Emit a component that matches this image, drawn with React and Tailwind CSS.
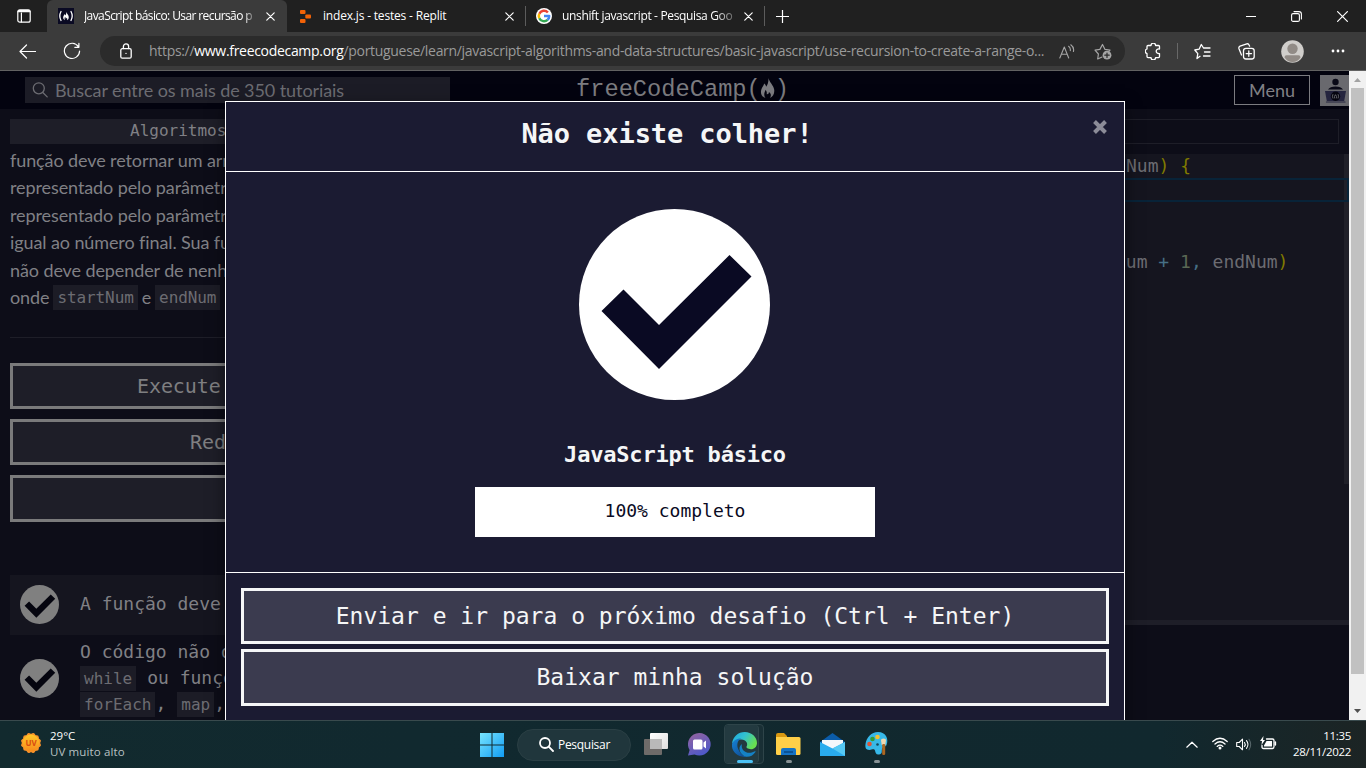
import React from "react";

const ui = "font-['Open_Sans','Noto_Sans',sans-serif]";
const mono = "font-['DejaVu_Sans_Mono','Liberation_Mono',monospace]";

function Svg({ w = 20, h = w, vb, className = "", children, ...rest }) {
  return (
    <svg width={w} height={h} viewBox={vb || `0 0 ${w} ${h}`} fill="none" stroke="currentColor" strokeWidth="1.2" strokeLinecap="round" strokeLinejoin="round" className={`shrink-0 ${className}`} {...rest}>
      {children}
    </svg>
  );
}

function Close() {
  return (
    <Svg w={9}>
      <path d="M.8.8 8.2 8.2M8.2.8.8 8.2" />
    </Svg>
  );
}

const flame = "M5.6 0C6.4 3 9.2 5 9.7 8.2C10 11 8.9 13 6.8 14C7.7 12.2 7.5 10.8 6 9.8C6 11 5.3 11.5 4.4 11.3C4.8 10 4.2 9 3.7 8.2C3 10 2 11.6 3.6 14C1 13.2 -.2 10.6.7 8C1.3 6.4 2.4 5.3 2.6 3.8C3.6 4.4 4 5.3 4 6.2C5.3 4.6 5.9 2.2 5.6 0Z";

function TabBar() {
  return (
    <div className="flex h-8 shrink-0 bg-[#202020]">
      <div className="flex w-[47px] items-center pl-[17px]">
        <Svg w={14}>
          <rect x=".8" y=".8" width="12.4" height="12.4" rx="2" />
          <path d="M1 2.7h12M4.4 4v9" />
          <path d="M2 2h10" strokeWidth="2" />
        </Svg>
      </div>
      <div className="flex w-[240px] items-center rounded-t-[6px] bg-[#3b3b3b] pl-[11px]">
        <Svg w={16} strokeWidth="1.3">
          <rect width="16" height="16" fill="#0a0a23" stroke="none" />
          <path d="M3 3.5Q.6 8 3 12.5M13 3.5q2.4 4.500 0 9" />
          <path d={flame} transform="translate(4.900 3.800) scale(.6)" fill="#fff" stroke="none" />
        </Svg>
        <div className={`${ui} ml-[10px] w-[174px] whitespace-nowrap text-[12px] leading-5 tracking-[-0.6px] [mask-image:linear-gradient(90deg,#000_92%,#0003_98%)]`}>
          JavaScript básico: Usar recursão p
        </div>
        <div className="ml-[8px]"><Close /></div>
      </div>
      <div className="flex w-[238px] items-center pl-[13px]">
        <Svg w={11} h={13} stroke="none" fill="#f26207">
          <rect width="5.500" height="4" rx="1" />
          <rect x="5.300" y="4.500" width="5.700" height="4" rx="1" />
          <rect y="9" width="5.500" height="4" rx="1" />
        </Svg>
        <div className={`${ui} ml-[12px] w-[182px] whitespace-nowrap text-[12px] leading-5 tracking-[-0.18px]`}>index.js - testes - Replit</div>
        <Close />
      </div>
      <div className="my-[6px] w-px bg-[#5c5c5c]" />
      <div className="flex w-[238px] items-center pl-[10px]">
        <Svg w={16} stroke="none">
          <circle cx="8" cy="8" r="8" fill="#fff" />
          <g fill="none" strokeWidth="2.500" strokeLinecap="butt">
            <path d="M11.900 4.500A5.200 5.200 0 0 0 3.300 5.800" stroke="#ea4335" />
            <path d="M3.300 5.700a5.200 5.200 0 0 0 0 4.600" stroke="#fbbc05" />
            <path d="M3.300 10.200a5.200 5.200 0 0 0 8.300 1.600" stroke="#34a853" />
            <path d="M11.500 11.900A5.200 5.200 0 0 0 13.200 8H8" stroke="#4285f4" />
          </g>
        </Svg>
        <div className={`${ui} ml-[10px] w-[174px] whitespace-nowrap text-[12px] leading-5 tracking-[-0.35px] [mask-image:linear-gradient(90deg,#000_88%,#0003_100%)]`}>
          unshift javascript - Pesquisa Goo
        </div>
        <div className="ml-[8px]"><Close /></div>
      </div>
      <div className="my-[6px] w-px bg-[#5c5c5c]" />
      <div className="flex flex-1 items-center pl-[11px]">
        <Svg w={13}><path d="M6.500 0v13M0 6.500h13" /></Svg>
      </div>
      <div className="flex items-center">
        <Svg w={10} className="mr-[35px]"><path d="M0 5.500h10" strokeWidth="1" /></Svg>
        <Svg w={11} className="mr-[35px]" strokeWidth="1.100">
          <rect x=".6" y="2.600" width="7.800" height="7.800" rx="1.500" />
          <path d="M3 .6h5a2.400 2.400 0 0 1 2.400 2.400v5" />
        </Svg>
        <Svg w={11} className="mr-[18px]"><path d="M.6.6l9.800 9.800M10.400.6.6 10.400" /></Svg>
      </div>
    </div>
  );
}

function Toolbar() {
  return (
    <div className="flex h-[39px] shrink-0 items-center border-b border-[#626262] bg-[#3b3b3b]">
      <Svg w={17} h={15} className="ml-[19px]"><path d="M1 7.500h15.500M7.500 1 1 7.500 7.500 14" /></Svg>
      <Svg w={18} className="ml-[27px]"><path d="M15.500 4.900A7.600 7.600 0 1 0 16.600 9M15.900 1.300V5.300H11.800" /></Svg>
      <div className="ml-[19px] flex h-[30px] w-[1025px] items-center rounded-full bg-[#2b2b2b] pl-[20px]">
        <Svg w={12} h={16} strokeWidth="1.300">
          <rect x=".8" y="5.700" width="10.400" height="9.500" rx="1.500" />
          <path d="M3.400 5.500V3.500a2.600 2.600 0 0 1 5.200 0v2" />
          <circle cx="6" cy="10.400" r=".7" fill="#fff" stroke="none" />
        </Svg>
        <div className={`${ui} ml-[17px] w-[897px] whitespace-nowrap text-[14px] leading-5 tracking-[-0.31px] text-[#9a9a9a]`}>
          https://<span className="text-white">www.freecodecamp.org</span>/portuguese/learn/javascript-algorithms-and-data-structures/basic-javascript/use-recursion-to-create-a-range-o...
        </div>
        <Svg w={16} h={15} className="ml-[13px] text-[#a5a5a5]" strokeWidth="1.100">
          <path d="M.8 14 5.300 3l4.400 11M2.400 10.300h5.800M9.600 2.300q2.200 1.700 1.700 4.400M11.800.8q3.700 2.700 2.600 6.700" />
        </Svg>
        <Svg w={18} h={17} className="ml-[19px] text-[#a5a5a5]">
          <path d="M8 14 3.700 16l.7-5L1 7.200l4.900-.8L8.500 1.500 11 6.400l5 .8-1.300 1.500" />
          <circle cx="13" cy="12.200" r="4.400" fill="currentColor" stroke="none" />
          <path d="M10.800 12.200h4.400M13 10v4.400" stroke="#2b2b2b" />
        </Svg>
      </div>
      <Svg w={16} h={17} className="ml-[20px]" strokeWidth="1.300">
        <path d="M2 3.500q0-1 1-1h3a2.300 2.300 0 0 1 4.600 0H13.500q1 0 1 1V6c-2.200-.3-3.300.9-3.300 2.300s1.300 2.500 3.300 2.300v3q0 1-1 1h-2.900a2.300 2.300 0 0 1-4.600 0H3q-1 0-1-1v-3a2.400 2.400 0 0 1 0-4.600Z" />
      </Svg>
      <div className="ml-[16px] h-4 w-px bg-[#686868]" />
      <Svg w={17} h={17} className="ml-[16px]" strokeWidth="1.300">
        <path d="M6 13.300 3 15.600l.8-5L.8 7l4.300-.8L7.300 1.500 9.500 5H16M10.500 9H16M9.500 13H16" />
      </Svg>
      <Svg w={17} h={17} className="ml-[27px]" strokeWidth="1.300">
        <rect x="5.500" y="5.300" width="10.700" height="10.700" rx="2.500" />
        <path d="M3.500 12 1 5.800Q.4 4 2 3.200L8.800.8q1.700-.4 2.300 1.200l.5 1.200M10.800 8v5.300M8.200 10.600h5.300" />
      </Svg>
      <Svg w={23} h={23} className="ml-[26px]" stroke="none">
        <circle cx="11.500" cy="11.500" r="11.300" fill="#d0cecb" />
        <circle cx="11.500" cy="8.700" r="5.200" fill="#918b86" />
        <path d="M3.500 17.500q0-2.200 2-2.200h12q2 0 2 2.200Q16.500 22 11.500 22t-8-4.500Z" fill="#918b86" />
      </Svg>
      <Svg w={14} h={4} className="ml-[27px]" stroke="none" fill="#fff">
        <circle cx="2" cy="2" r="1.400" /><circle cx="7" cy="2" r="1.400" /><circle cx="12" cy="2" r="1.400" />
      </Svg>
    </div>
  );
}

function SiteNav() {
  return (
    <div className="flex h-[38px] shrink-0 bg-[#03030f] font-['Lato',sans-serif]">
      <div className="ml-[25px] mt-[6px] flex h-[26px] w-[425px] items-center bg-[#1c1c26] pl-[7px] text-[#6c6c72]">
        <Svg w={16} strokeWidth="1.300"><circle cx="6.800" cy="6.300" r="5.500" /><path d="m10.800 10.500 4.400 4.400" /></Svg>
        <span className="ml-[7px] whitespace-nowrap text-[18px] leading-6 tracking-[-0.08px]">Buscar entre os mais de 350 tutoriais</span>
      </div>
      <div className="ml-[126px] mt-[5px] flex h-[27px] items-start text-[#7c7c80]">
        <span className="whitespace-nowrap font-['Liberation_Mono',monospace] text-[23.700px] leading-[27px]">freeCodeCamp(</span>
        <Svg w={15} h={20} vb="0 0 10 14" className="-ml-[1px] mt-[2px]"><path d={flame} fill="currentColor" stroke="none" /></Svg>
        <span className="font-['Liberation_Mono',monospace] text-[23.700px] leading-[27px]">)</span>
      </div>
      <div className="flex-1" />
      <div className="mt-[4px] flex h-[30px] w-[76px] items-center justify-center border border-[#7b7b80] pb-px text-[18px] leading-6 text-[#808085]">Menu</div>
      <Svg w={29} h={31} className="ml-[10px] mt-[4px]" stroke="none">
        <rect width="29" height="31" fill="#69696e" />
        <circle cx="15.500" cy="7" r="3.200" fill="#090917" />
        <path d="M8 14.500q2-3 7.500-3t7.500 3Z" fill="#090917" />
        <path d="M5 16h21l-1.800 10H6.800Z" fill="#25253f" />
        <path d="M6.500 27h18.500" stroke="#25253f" strokeWidth="1.200" />
        <circle cx="15.500" cy="21.300" r="4.700" fill="#05050f" />
        <path d="M12.800 19.500q-1 1.800 0 3.600M18.200 19.500q1 1.800 0 3.600M14.500 23q-.7-1.600 1-3.300 1.700 1.700 1 3.300" stroke="#77777c" strokeWidth=".8" />
      </Svg>
    </div>
  );
}

function Check({ size, disc, mark, className = "" }) {
  return (
    <svg width={size} height={size} viewBox="0 0 191 191" className={`shrink-0 ${className}`}>
      <circle cx="95.500" cy="95.500" r="95.500" fill={disc} />
      <path d="M22.500 102 44.500 80.500 80 116 150.500 46 172.500 67.500 80 160Z" fill={mark} />
    </svg>
  );
}

function Code({ children }) {
  return <code className={`${mono} inline-block h-[25px] bg-[#1c1c26] px-1 align-middle text-[16px] leading-[25px] text-[#6c6c72]`}>{children}</code>;
}

function PanelButton({ children, className }) {
  return (
    <div className={`${mono} shrink-0 overflow-hidden whitespace-nowrap border-[3px] border-[#7a7a7b] bg-[#1e1e28] text-[20px] leading-[40px] tracking-[-0.1px] text-[#7f7f81] ${className}`}>{children}</div>
  );
}

function Instructions() {
  return (
    <div className="flex w-[450px] shrink-0 flex-col pl-[10px] pt-[10px] text-[#808085]">
      <div className={`${mono} h-[25px] shrink-0 whitespace-nowrap bg-[#1e1e28] pl-[120px] text-[16px] leading-[23px]`}>Algoritmos</div>
      <div className="mt-[3px] h-[165px] shrink-0 whitespace-nowrap font-['Lato',sans-serif] text-[18px] leading-[27.400px] tracking-[-0.1px]">
        <div>função deve retornar um array</div>
        <div>representado pelo parâmetro</div>
        <div>representado pelo parâmetro</div>
        <div>igual ao número final. Sua função</div>
        <div>não deve depender de nenhum</div>
        <div className="flex items-center gap-[4px]">onde <Code>startNum</Code> e <Code>endNum</Code></div>
      </div>
      <div className="mt-[25px] h-px shrink-0 bg-[#1e1e28]" />
      <PanelButton className="mt-[25px] h-[46px] pl-[124px]">Execute os testes</PanelButton>
      <PanelButton className="mt-[10px] h-[46px] pl-[177px]">Redefinir</PanelButton>
      <PanelButton className="mt-[10px] h-[47px]" />
      <div className={`${mono} mt-[53px] flex h-[60px] shrink-0 items-center bg-[#15151f] pl-[10px] text-[18px]`}>
        <Check size={39} disc="#808080" mark="#05050f" className="-mt-px" />
        <span className="-mt-[4px] ml-[21px] whitespace-nowrap">A função deve</span>
      </div>
      <div className={`${mono} flex h-[86px] shrink-0 items-center pl-[10px] text-[18px] leading-[26px]`}>
        <Check size={39} disc="#808080" mark="#05050f" />
        <div className="ml-[21px] whitespace-nowrap">
          <div>O código não deve</div>
          <div className="flex items-center gap-[11px]"><Code>while</Code><span>ou funções</span></div>
          <div className="flex items-center"><Code>forEach</Code><span className="mr-[11px]">,</span><Code>map</Code><span>,</span></div>
        </div>
      </div>
    </div>
  );
}

function Editor() {
  return (
    <div className={`${mono} flex min-w-0 flex-1 flex-col text-[18px] text-[#6c6c72]`}>
      <div className="ml-[10px] mr-[10px] mt-[10px] h-[25px] shrink-0 border border-[#1e1e28]" />
      <div className="mt-[10px] flex h-[466px] shrink-0 bg-[#15151f]">
        <div className="min-w-0 flex-1 whitespace-pre">
          <div className="h-[24px] pl-[676px] leading-[24px]">Num<span className="text-[#807a00]">) {"{"}</span></div>
          <div className="relative -mr-[5px] h-[24px] border-2 border-[#082338]" />
          <div className="mt-[48px] h-[24px] pl-[665px] leading-[24px]">Num <span className="text-[#466f85]">+</span> <span className="text-[#5a6854]">1</span><span className="text-[#466f85]">,</span> endNum<span className="text-[#807a00]">)</span></div>
        </div>
        <div className="h-[330px] w-[5px] bg-[#202029]" />
      </div>
      <div className="h-[5px] shrink-0 bg-[#1e1e28]" />
    </div>
  );
}

function ModalButton({ children, className }) {
  return (
    <button className={`block w-full border-[3px] border-[#f5f6f7] bg-[#3b3b4f] text-[23px] text-[#f5f6f7] ${className}`}>{children}</button>
  );
}

function Modal() {
  return (
    <div className={`${mono} absolute left-[225px] top-[30px] flex h-[640px] w-[900px] flex-col border border-white bg-[#1b1b32] text-[#f5f6f7] shadow-[0_5px_15px_rgba(0,0,0,0.5)]`}>
      <div className="flex h-[70px] shrink-0 items-start border-b border-white pt-[12px]">
        <h2 className="ml-[15px] flex-1 text-center text-[27px] font-bold leading-[40px] tracking-[-0.08px]">Não existe colher!</h2>
        <Svg w={14} className="mr-[17px] mt-[6px] text-[#8c8c98]" strokeLinecap="butt" strokeWidth="4"><path d="M1.500 1.500l11 11M12.500 1.500l-11 11" /></Svg>
      </div>
      <div className="flex h-[401px] shrink-0 flex-col items-center border-b border-white pt-[37px]">
        <Check size={191} disc="#ffffff" mark="#0a0a23" className="mr-px" />
        <div className="mt-[40px] text-[22px] font-bold leading-[30px] tracking-[-0.2px]">JavaScript básico</div>
        <div className="mt-[17px] h-[50px] w-[400px] bg-white text-center text-[18px] leading-[47px] text-[#0a0a23]">100% completo</div>
      </div>
      <div className="px-[15px] pt-[15px]">
        <ModalButton className="h-[56px]">Enviar e ir para o próximo desafio (Ctrl + Enter)</ModalButton>
        <ModalButton className="mt-[5px] h-[57px]">Baixar minha solução</ModalButton>
      </div>
    </div>
  );
}

function Scrollbar() {
  return (
    <div className="flex w-[17px] shrink-0 flex-col items-center bg-[#f1f1f1]">
      <Svg w={7} h={4} className="mt-[7px]" stroke="none"><path d="M0 4 3.500 0 7 4Z" fill="#a3a3a3" /></Svg>
      <div className="mt-[6px] h-[586px] w-[13px] bg-[#c1c1c1]" />
      <Svg w={7} h={4} className="mt-[35px]" stroke="none"><path d="M0 0h7L3.500 4Z" fill="#505050" /></Svg>
    </div>
  );
}

function Taskbar() {
  return (
    <div className={`${ui} flex h-12 shrink-0 items-center border-t border-[#394a4d] bg-[linear-gradient(90deg,#122a2e,#11292f_30%,#11282e_85%,#1c2424)]`}>
      <Svg w={22} h={22} className="-mt-[3px] ml-[20px]" stroke="none">
        <defs><linearGradient id="sun" x2="0" y2="1"><stop stopColor="#ffc928" /><stop offset="1" stopColor="#f78a1d" /></linearGradient></defs>
        {[0, 30, 60].map((a) => <rect key={a} x="3.200" y="3.200" width="15.600" height="15.600" rx="2" fill="#f8922a" transform={`rotate(${a} 11 11)`} />)}
        <circle cx="11" cy="11" r="8.600" fill="url(#sun)" />
        <text x="11" y="14" textAnchor="middle" fill="#d84b10" fontSize="8" fontWeight="700">UV</text>
      </Svg>
      <div className="-mt-[2px] ml-[8px] w-[430px] text-[11.500px] leading-[16px]">
        <div>29°C</div>
        <div className="tracking-[0.12px] text-[#b9c1c2]">UV muito alto</div>
      </div>
      <Svg w={24} h={24} stroke="none">
        <defs><linearGradient id="win" x2="1" y2="1"><stop stopColor="#78e5ff" /><stop offset="1" stopColor="#119cf3" /></linearGradient></defs>
        <path d="M0 0h11.500v11.500H0ZM12.500 0H24v11.500H12.500ZM0 12.500h11.500V24H0ZM12.500 12.500H24V24H12.500Z" fill="url(#win)" />
      </Svg>
      <div className="ml-[13px] flex h-8 w-[114px] shrink-0 items-center rounded-full border border-[#2a3f44] bg-[#20363c] pl-[21px]">
        <Svg w={15} strokeWidth="1.800"><circle cx="6" cy="6" r="5" /><path d="m9.700 9.700 4.300 4.300" /></Svg>
        <span className="ml-[4px] text-[12px] tracking-[-0.3px]">Pesquisar</span>
      </div>
      <Svg w={24} h={22} className="-mt-[2px] ml-[13px]" stroke="none">
        <defs><linearGradient id="tv" x2="1" y2="1"><stop stopColor="#fff" /><stop offset="1" stopColor="#dedede" /></linearGradient></defs>
        <rect x="6" width="18" height="16" rx="1" fill="url(#tv)" />
        <rect y="6" width="18" height="16" rx="1" fill="#6e6b69" />
        <path d="M6 6h12v10H6Z" fill="#b9b9b9" />
      </Svg>
      <Svg w={23} h={23} className="-mt-px ml-[20px]" stroke="none">
        <defs><linearGradient id="chat" x2=".5" y2="1"><stop stopColor="#97649c" /><stop offset="1" stopColor="#5059c9" /></linearGradient></defs>
        <path d="M11.500 0A11.300 11.300 0 1 1 6.500 21.500L0 22.500 1.600 17A11.300 11.300 0 0 1 11.500 0Z" fill="url(#chat)" />
        <rect x="5" y="6.500" width="9.500" height="10" rx="1.500" fill="#fff" /><path d="M15.500 9.500 18 7.500v8l-2.500-2Z" fill="#fff" />
      </Svg>
      <div className="-mt-px ml-[13px] flex h-[40px] w-[40px] shrink-0 rounded-[4px] border border-[#2e4449] bg-[#192f35]">
        <div className="flex w-[34px] shrink-0 flex-col items-center rounded-[4px] border-r border-[#30464b] bg-[#233a40] pl-[6px] pt-[7px]">
          <Svg w={25} h={25} vb="0 0 24 24" stroke="none">
            <defs>
              <linearGradient id="edgeTop" x2="1" y2=".5"><stop stopColor="#1ba7e2" /><stop offset=".5" stopColor="#33c2cf" /><stop offset="1" stopColor="#68df50" /></linearGradient>
              <linearGradient id="edgeLow" x2=".7" y2="1"><stop stopColor="#1684d8" /><stop offset="1" stopColor="#104f97" /></linearGradient>
            </defs>
            <path d="M0 11.500C.7 4.500 6 0 12.200 0 19 0 24 4.900 24 10.500c0 3.700-2.700 6-5.800 6-3 0-4.900-1.300-4.200-2.500 1.700-2.800-.5-6.800-5-6.800-4.100 0-7.600 2-9 4.300Z" fill="url(#edgeTop)" />
            <path d="M0 11.500C1.500 7.600 5.500 6 9 6.200c-3.700 1.600-4.800 5.700-3.200 9.800 1.300 3.500 4 6.500 7.700 7.800C5.500 24.700-.8 18.800 0 11.500Z" fill="url(#edgeLow)" />
            <path d="M9.700 11.500c-1.500 3.700 1.600 8.500 7 8.500 2 0 3.900-.7 5.300-1.500.5-.2.800.2.500.6C20.300 22.400 17 24.200 13.500 23.800 6.500 21.200 5.500 14 9.700 11.500Z" fill="#1581c4" />
          </Svg>
          <div className="mt-[3px] h-[3px] w-4 shrink-0 rounded-full bg-[#4cc2f5]" />
        </div>
      </div>
      <div className="-mt-[3px] ml-[12px] flex h-[40px] flex-col items-center justify-end">
        <Svg w={25} h={23} stroke="none">
          <path d="M0 2q0-2 2-2h6l3 3v4H0Z" fill="#d99811" /><path d="M0 4h23q1.500 0 1.500 1.500v15Q24.500 22 23 22H1.500Q0 22 0 20.500Z" fill="#ffcf48" />
          <path d="M5 17q0-2 2-2h11q2 0 2 2v5H5Z" fill="#1473c5" /><path d="M8 18h9v2H8Z" fill="#0a5294" />
        </Svg>
        <div className="mt-[4px] h-[3px] w-[6px] rounded-full bg-[#879295]" />
      </div>
      <Svg w={25} h={23} className="-mt-px ml-[19px]" stroke="none">
        <path d="M12.500 0 25 9v14H0V9Z" fill="#0b5ca9" /><path d="M2 7h21v7l-10.500 4L2 14Z" fill="#f4f7fb" />
        <path d="M0 9 12.500 15.500 25 9v14H0Z" fill="#29abed" /><path d="M12.500 15.500 25 23V9Z" fill="#55c9f4" />
      </Svg>
      <div className="-mt-[3px] ml-[20px] flex h-[40px] flex-col items-center justify-end">
        <Svg w={24} h={24} stroke="none">
          <path d="M13 0C21 0 24 7 21.500 13c-1 2.300-4 1.500-4.500 4-.5 3 .5 5-3 5.500-3 .5-3.500-2-4-4-.8-2.500-3-.8-5.500-.6C1 18 0 16 .5 12 1.500 5 6.500 0 13 0Z" fill="#37b8e8" />
          <circle cx="4.500" cy="12" r="2.300" fill="#dc5436" /><circle cx="7.500" cy="7" r="2.300" fill="#359d35" /><circle cx="12.500" cy="5" r="2.300" fill="#f5c12e" /><circle cx="12.500" cy="12.500" r="1.300" fill="#12465d" />
          <path d="M16 8q0-1.500 2.500-1.500T21 8l-.7 5h-3.600Z" fill="#efd7af" /><rect x="17.200" y="12" width="3" height="11" rx="1.300" fill="#ac6722" />
        </Svg>
        <div className="mt-[4px] h-[3px] w-[6px] rounded-full bg-[#879295]" />
      </div>
      <div className="flex-1" />
      <Svg w={12} h={7}><path d="m.8 6.200 5.200-5 5.200 5" /></Svg>
      <Svg w={16} h={13} className="-mt-[2px] ml-[14px]" strokeWidth="1.300">
        <path d="M.8 4.500Q8-2 15.200 4.500M3 7q5-4.500 10 0M5.200 9.400q2.800-2.400 5.600 0" /><circle cx="8" cy="11" r="1.500" fill="#fff" stroke="none" />
      </Svg>
      <Svg w={16} h={13} className="-mt-px ml-[8px]" strokeWidth="1.100">
        <path d="M.7 4.500h2.500L6.500 1.200v10.600L3.200 8.500H.7ZM8.500 4.500q1.500 2 0 4M10.500 2.700q3 3.800 0 7.600" /><path d="M13 1.300q3.300 5.200 0 10.400" stroke="#566569" />
      </Svg>
      <Svg w={17} h={14} className="-mt-[3px] ml-[8px]" strokeWidth="1.300">
        <path d="M6.500 3h6q1.500 0 1.500 1.500v6Q14 12.500 12.500 12.500H3.500q-1.500 0-1.500-1.500V9.500M15.500 6v3" /><path d="M6.500 5h5.500v5.500H4V9.500Z" fill="#fff" stroke="none" /><path d="M3.500 0 0 5h2L1.500 9 5 4H3Z" fill="#fff" stroke="none" />
      </Svg>
      <div className="-mt-[2px] ml-[7px] mr-[15px] w-[67px] whitespace-nowrap text-right text-[11.500px] leading-[16px] tracking-[-0.3px]">
        <div>11:35</div>
        <div>28/11/2022</div>
      </div>
    </div>
  );
}

export default function App() {
  return (
    <div className="flex h-[768px] w-[1366px] flex-col overflow-hidden text-white">
      <TabBar />
      <Toolbar />
      <div className="relative flex h-[649px] shrink-0 overflow-hidden bg-[#0d0d18]">
        <div className="flex min-w-0 flex-1 flex-col">
          <SiteNav />
          <div className="flex min-h-0 flex-1">
            <Instructions />
            <Editor />
          </div>
        </div>
        <Scrollbar />
        <Modal />
      </div>
      <Taskbar />
    </div>
  );
}
